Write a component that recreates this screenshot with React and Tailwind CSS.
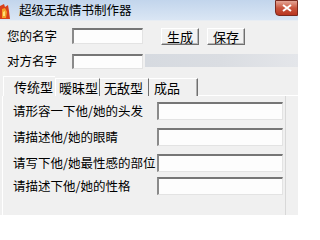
import React from "react";

const font = { fontFamily: '"Noto Sans CJK SC", "Noto Sans", sans-serif' };

function Field({ w }) {
  return (
    <div
      className={`${w} h-full bg-[#fdfdfd] border-t-2 border-l-2 border-b border-r border-t-[#767676] border-l-[#8a8a8a] border-b-[#e3e3e3] border-r-[#e3e3e3]`}
    />
  );
}

function Btn({ children }) {
  return (
    <div className="w-[38px] h-[17px] flex items-center justify-center bg-[#f2f2f2] border border-t-white border-l-white border-b-[#6f6f6f] border-r-[#6f6f6f] shadow-[inset_-1px_-1px_0_#b8b8b8] text-[13px] leading-none text-black">
      {children}
    </div>
  );
}

function Row({ label, mt }) {
  return (
    <div className={`flex items-center h-[18px] ${mt}`}>
      <div className="w-[154px] pl-[10px] text-[12.5px] leading-none text-black whitespace-nowrap">{label}</div>
      <div className="h-[18px]">
        <Field w="w-[126px]" />
      </div>
    </div>
  );
}

export default function App() {
  return (
    <div className="w-[298px] h-[215px] bg-[#f0f0f0] overflow-hidden" style={font}>
      {/* title bar */}
      <div className="h-[21px] flex items-start justify-between bg-gradient-to-b from-[#c2d5ec] to-[#dae6f4] border-b border-[#e8edf3]">
        <div className="flex items-center h-[20px]">
          <svg width="10" height="16" viewBox="0 0 10 16" className="mt-[1px]">
            <path d="M0 3 L4 1 L5 4 L8 2 L9 8 L10 16 L0 16 Z" fill="#d8401a" />
            <path d="M2 6 L5 5 L7 9 L6 15 L2 15 Z" fill="#f4a12a" />
            <path d="M3 9 L5 8 L5 13 L3 13 Z" fill="#ffe07a" />
          </svg>
          <span className="ml-[9px] text-[12.5px] leading-none text-black">超级无敌情书制作器</span>
        </div>
        <div className="w-[23px] h-[16px] rounded-bl-[4px] bg-gradient-to-b from-[#e3a596] via-[#c9553e] to-[#b9351f] border border-[#7a2a1f] flex items-center justify-center">
          <svg width="10" height="8" viewBox="0 0 10 8">
            <path d="M1 1 L9 7 M9 1 L1 7" stroke="#fff" strokeWidth="2" />
          </svg>
        </div>
      </div>

      {/* row 1 */}
      <div className="flex items-center h-[18px] mt-[6px]">
        <div className="w-[72px] pl-[7px] text-[12.5px] leading-none text-black">您的名字</div>
        <div className="h-[16px]">
          <Field w="w-[71px]" />
        </div>
        <div className="ml-[18px]">
          <Btn>生成</Btn>
        </div>
        <div className="ml-[8px]">
          <Btn>保存</Btn>
        </div>
      </div>

      {/* row 2 */}
      <div className="flex items-start h-[15px] mt-[9px]">
        <div className="w-[72px] pl-[7px] h-[15px] flex items-center text-[12.5px] leading-none text-black">对方名字</div>
        <div className="h-[15px]">
          <Field w="w-[71px]" />
        </div>
        <div className="ml-[2px] flex-1 h-[13px] bg-gradient-to-r from-[#d6dae0] via-[#dadde2] to-[#e4e6ea]" />
      </div>

      {/* tabs */}
      <div className="flex items-end h-[20px] mt-[7px] pl-[3px]">
        <div className="w-[52px] h-[20px] flex items-center pl-[10px] border-t border-l border-white text-[13px] leading-none text-black">传统型</div>
        <div className="w-[45px] h-[18px] flex items-center pl-[3px] border-t border-l border-white border-r border-r-[#6f6f6f] text-[13px] leading-none text-black">暧昧型</div>
        <div className="w-[49px] h-[18px] flex items-center pl-[4px] border-t border-white border-r border-r-[#6f6f6f] text-[13px] leading-none text-black">无敌型</div>
        <div className="w-[49px] h-[18px] flex items-center pl-[5px] border-t border-white border-r border-r-[#6f6f6f] shadow-[inset_-1px_0_0_#b0b0b0] text-[13px] leading-none text-black">成品</div>
        <div className="flex-1 h-full border-b border-white" />
      </div>

      {/* panel */}
      <div className="ml-[2px] w-[284px] h-[119px] border-l border-white border-r border-r-[#d8d8d8] pt-[6px]">
        <Row label="请形容一下他/她的头发" mt="mt-0" />
        <Row label="请描述他/她的眼睛" mt="mt-[8px]" />
        <Row label="请写下他/她最性感的部位" mt="mt-[8px]" />
        <Row label="请描述下他/她的性格" mt="mt-[5px]" />
      </div>
    </div>
  );
}
